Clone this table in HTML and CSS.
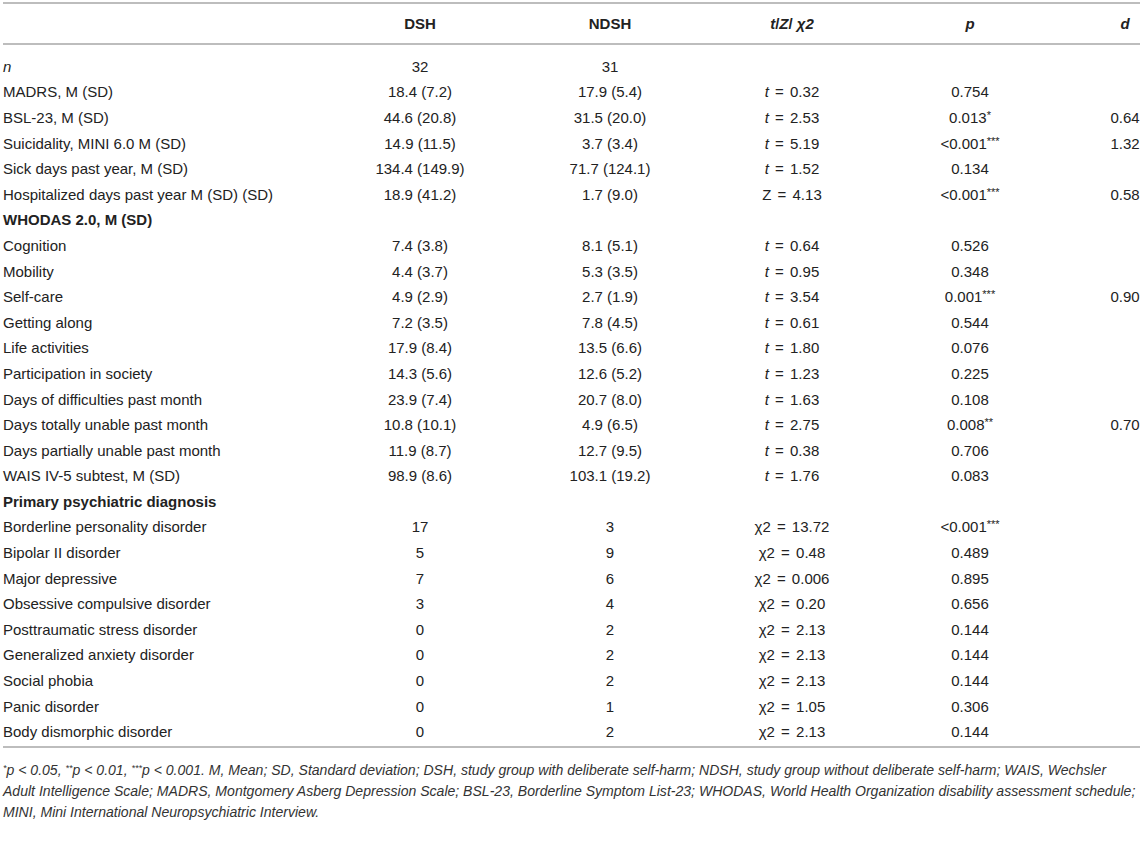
FILE: index.html
```html
<!DOCTYPE html>
<html>
<head>
<meta charset="utf-8">
<link rel="stylesheet" href="styles.css">
</head>
<body>
<div class="wrap">
<table class="tbl">
<colgroup>
<col class="c1"><col class="c2"><col class="c3"><col class="c4"><col class="c5"><col class="c6">
</colgroup>
<thead>
<tr><th class="lab"></th><th>DSH</th><th>NDSH</th><th class="stat"><i>t</i>/<i>Z</i>/ <i>χ2</i></th><th class="pcol"><i>p</i></th><th class="dcol"><i>d</i></th></tr>
</thead>
<tbody>
<tr class="first"><td class="lab"><i>n</i></td><td>32</td><td>31</td><td class="stat"></td><td class="pcol"></td><td class="dcol"></td></tr>
<tr><td class="lab">MADRS, M (SD)</td><td>18.4 (7.2)</td><td>17.9 (5.4)</td><td class="stat"><i>t</i> = 0.32</td><td class="pcol">0.754</td><td class="dcol"></td></tr>
<tr><td class="lab">BSL-23, M (SD)</td><td>44.6 (20.8)</td><td>31.5 (20.0)</td><td class="stat"><i>t</i> = 2.53</td><td class="pcol">0.013<span class="star">*</span></td><td class="dcol">0.64</td></tr>
<tr><td class="lab">Suicidality, MINI 6.0 M (SD)</td><td>14.9 (11.5)</td><td>3.7 (3.4)</td><td class="stat"><i>t</i> = 5.19</td><td class="pcol">&lt;0.001<span class="star">***</span></td><td class="dcol">1.32</td></tr>
<tr><td class="lab">Sick days past year, M (SD)</td><td>134.4 (149.9)</td><td>71.7 (124.1)</td><td class="stat"><i>t</i> = 1.52</td><td class="pcol">0.134</td><td class="dcol"></td></tr>
<tr><td class="lab">Hospitalized days past year M (SD) (SD)</td><td>18.9 (41.2)</td><td>1.7 (9.0)</td><td class="stat">Z = 4.13</td><td class="pcol">&lt;0.001<span class="star">***</span></td><td class="dcol">0.58</td></tr>
<tr><td class="lab"><b>WHODAS 2.0, M (SD)</b></td><td></td><td></td><td class="stat"></td><td class="pcol"></td><td class="dcol"></td></tr>
<tr><td class="lab">Cognition</td><td>7.4 (3.8)</td><td>8.1 (5.1)</td><td class="stat"><i>t</i> = 0.64</td><td class="pcol">0.526</td><td class="dcol"></td></tr>
<tr><td class="lab">Mobility</td><td>4.4 (3.7)</td><td>5.3 (3.5)</td><td class="stat"><i>t</i> = 0.95</td><td class="pcol">0.348</td><td class="dcol"></td></tr>
<tr><td class="lab">Self-care</td><td>4.9 (2.9)</td><td>2.7 (1.9)</td><td class="stat"><i>t</i> = 3.54</td><td class="pcol">0.001<span class="star">***</span></td><td class="dcol">0.90</td></tr>
<tr><td class="lab">Getting along</td><td>7.2 (3.5)</td><td>7.8 (4.5)</td><td class="stat"><i>t</i> = 0.61</td><td class="pcol">0.544</td><td class="dcol"></td></tr>
<tr><td class="lab">Life activities</td><td>17.9 (8.4)</td><td>13.5 (6.6)</td><td class="stat"><i>t</i> = 1.80</td><td class="pcol">0.076</td><td class="dcol"></td></tr>
<tr><td class="lab">Participation in society</td><td>14.3 (5.6)</td><td>12.6 (5.2)</td><td class="stat"><i>t</i> = 1.23</td><td class="pcol">0.225</td><td class="dcol"></td></tr>
<tr><td class="lab">Days of difficulties past month</td><td>23.9 (7.4)</td><td>20.7 (8.0)</td><td class="stat"><i>t</i> = 1.63</td><td class="pcol">0.108</td><td class="dcol"></td></tr>
<tr><td class="lab">Days totally unable past month</td><td>10.8 (10.1)</td><td>4.9 (6.5)</td><td class="stat"><i>t</i> = 2.75</td><td class="pcol">0.008<span class="star">**</span></td><td class="dcol">0.70</td></tr>
<tr><td class="lab">Days partially unable past month</td><td>11.9 (8.7)</td><td>12.7 (9.5)</td><td class="stat"><i>t</i> = 0.38</td><td class="pcol">0.706</td><td class="dcol"></td></tr>
<tr><td class="lab">WAIS IV-5 subtest, M (SD)</td><td>98.9 (8.6)</td><td>103.1 (19.2)</td><td class="stat"><i>t</i> = 1.76</td><td class="pcol">0.083</td><td class="dcol"></td></tr>
<tr><td class="lab"><b>Primary psychiatric diagnosis</b></td><td></td><td></td><td class="stat"></td><td class="pcol"></td><td class="dcol"></td></tr>
<tr><td class="lab">Borderline personality disorder</td><td>17</td><td>3</td><td class="stat">χ2 = 13.72</td><td class="pcol">&lt;0.001<span class="star">***</span></td><td class="dcol"></td></tr>
<tr><td class="lab">Bipolar II disorder</td><td>5</td><td>9</td><td class="stat">χ2 = 0.48</td><td class="pcol">0.489</td><td class="dcol"></td></tr>
<tr><td class="lab">Major depressive</td><td>7</td><td>6</td><td class="stat">χ2 = 0.006</td><td class="pcol">0.895</td><td class="dcol"></td></tr>
<tr><td class="lab">Obsessive compulsive disorder</td><td>3</td><td>4</td><td class="stat">χ2 = 0.20</td><td class="pcol">0.656</td><td class="dcol"></td></tr>
<tr><td class="lab">Posttraumatic stress disorder</td><td>0</td><td>2</td><td class="stat">χ2 = 2.13</td><td class="pcol">0.144</td><td class="dcol"></td></tr>
<tr><td class="lab">Generalized anxiety disorder</td><td>0</td><td>2</td><td class="stat">χ2 = 2.13</td><td class="pcol">0.144</td><td class="dcol"></td></tr>
<tr><td class="lab">Social phobia</td><td>0</td><td>2</td><td class="stat">χ2 = 2.13</td><td class="pcol">0.144</td><td class="dcol"></td></tr>
<tr><td class="lab">Panic disorder</td><td>0</td><td>1</td><td class="stat">χ2 = 1.05</td><td class="pcol">0.306</td><td class="dcol"></td></tr>
<tr class="last"><td class="lab">Body dismorphic disorder</td><td>0</td><td>2</td><td class="stat">χ2 = 2.13</td><td class="pcol">0.144</td><td class="dcol"></td></tr>
</tbody>
</table>
<p class="note"><span class="nstar">*</span><i>p</i> &lt; 0.05, <span class="nstar">**</span><i>p</i> &lt; 0.01, <span class="nstar">***</span><i>p</i> &lt; 0.001. M, Mean; SD, Standard deviation; DSH, study group with deliberate self-harm; NDSH, study group without deliberate self-harm; WAIS, Wechsler<br>Adult Intelligence Scale; MADRS, Montgomery Asberg Depression Scale; BSL-23, Borderline Symptom List-23; WHODAS, World Health Organization disability assessment schedule;<br>MINI, Mini International Neuropsychiatric Interview.</p>
</div>
</body>
</html>
```

FILE: styles.css
```css
html, body {
  margin: 0;
  padding: 0;
  background: #ffffff;
}
body {
  font-family: "Liberation Sans", Arial, sans-serif;
  color: #222222;
}
.wrap {
  padding: 2px 4px 0 3px;
}
.tbl {
  width: 1137px;
  border-collapse: collapse;
  table-layout: fixed;
  font-size: 15px;
}
.c1 { width: 330px; }
.c2 { width: 174px; }
.c3 { width: 206px; }
.c4 { width: 158px; }
.c5 { width: 198px; }
.c6 { width: 71px; }
.tbl thead tr {
  border-top: 2px solid #bdbdbd;
  border-bottom: 2px solid #bdbdbd;
}
.tbl th {
  height: 39px;
  padding: 0;
  font-weight: bold;
  text-align: center;
  vertical-align: middle;
}
.tbl td {
  height: 25.6px;
  padding: 0;
  text-align: center;
  vertical-align: middle;
  line-height: 18px;
  white-space: nowrap;
}
.tbl .lab {
  text-align: left;
}
.tbl td.stat {
  word-spacing: 2px;
}
.tbl .dcol {
  padding-left: 41px;
}
.tbl tr.first td {
  padding-top: 9px;
  height: 25.6px;
}
.tbl tr.last {
  border-bottom: 2px solid #bdbdbd;
}
.tbl tr.last td {
  padding-bottom: 1px;
}
.star {
  font-size: 11px;
  line-height: 1;
  vertical-align: 4px;
}
.note {
  margin: 12px -3px 0 0;
  font-size: 14.05px;
  line-height: 21px;
  font-style: italic;
  color: #333333;
}
.nstar {
  font-size: 9px;
  line-height: 1;
  vertical-align: 4px;
}
```
